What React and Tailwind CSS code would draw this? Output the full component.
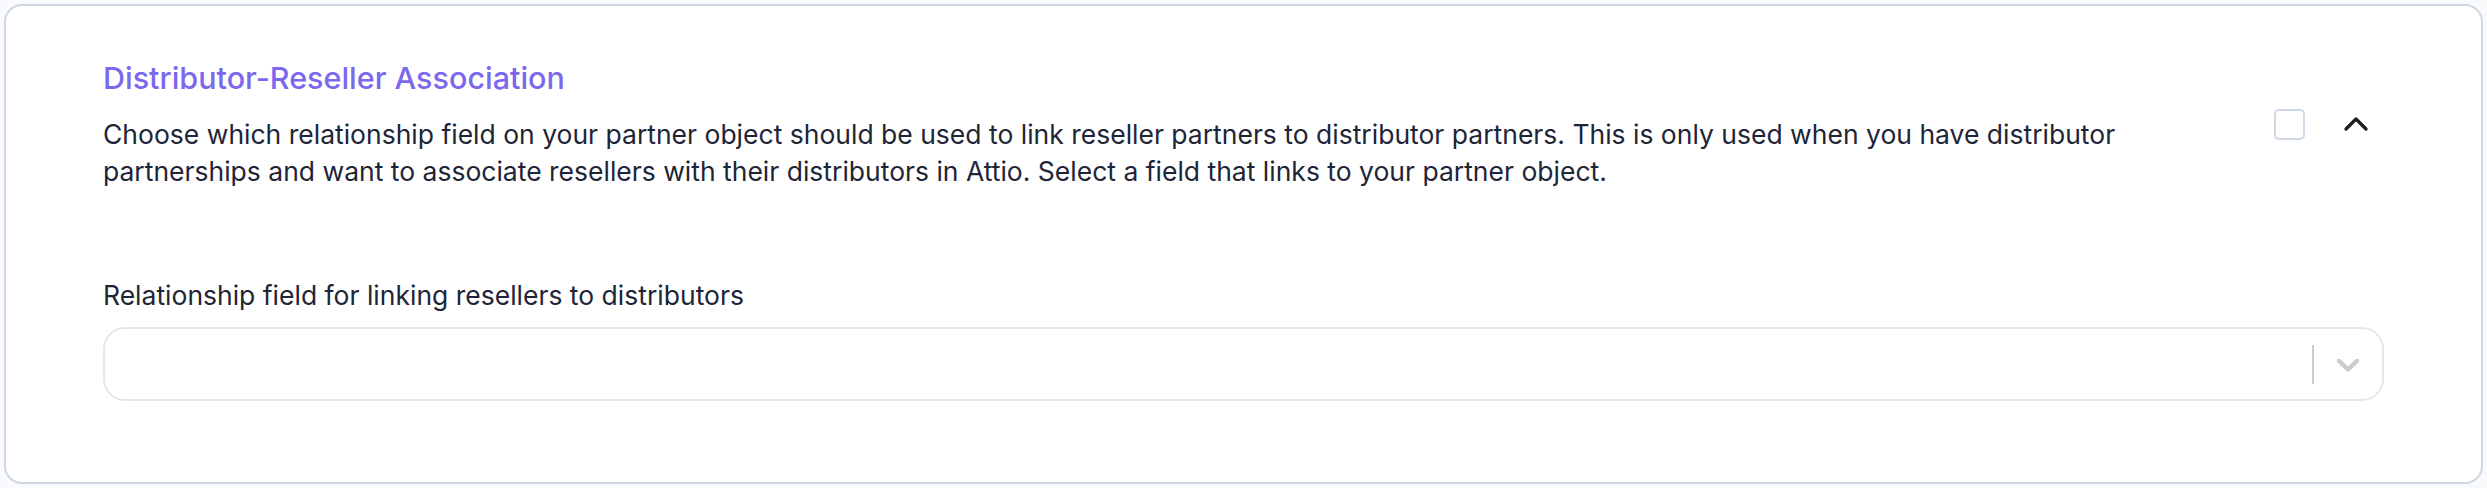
import { ChevronUp } from "lucide-react";

function SelectChevron() {
  return (
    <svg viewBox="0 0 20 20" className="w-[38px] h-[38px] fill-[#cccccc]" aria-hidden="true">
      <path d="M4.516 7.548c0.436-0.446 1.043-0.481 1.576 0l3.908 3.747 3.908-3.747c0.533-0.481 1.141-0.446 1.574 0 0.436 0.445 0.408 1.197 0 1.615-0.406 0.418-4.695 4.502-4.695 4.502-0.217 0.223-0.502 0.335-0.787 0.335s-0.57-0.112-0.789-0.335c0 0-4.287-4.084-4.695-4.502s-0.436-1.17 0-1.615z" />
    </svg>
  );
}

export default function App() {
  return (
    <div className="min-h-screen bg-[#f8fafc] p-1 font-['Inter',sans-serif]">
      <div className="bg-white border-2 border-[#cfd8e4] rounded-[18px] pt-[52px] pb-[81px] px-[97px]">
        <div className="flex items-center">
          <div className="flex-1 max-w-[2100px]">
            <h2 className="text-[30.5px] leading-[40px] font-medium text-[#7b68ee]">
              Distributor-Reseller Association
            </h2>
            <p className="mt-[18px] text-[26.5px] leading-[37px] text-[#1e2537]">
              Choose which relationship field on your partner object should be used to link reseller partners to distributor partners. This is only used when you have distributor partnerships and want to associate resellers with their distributors in Attio. Select a field that links to your partner object.
            </p>
          </div>
          <div className="ml-auto flex items-center gap-[31px] pr-[8px]">
            <div className="w-[31px] h-[31px] rounded-[5px] border-2 border-[#cfd8e4] bg-white" />
            <ChevronUp size={40} strokeWidth={2} className="text-[#1f1f1f]" />
          </div>
        </div>

        <label className="block mt-[87px] text-[26.5px] leading-[36px] text-[#1e2537]">
          Relationship field for linking resellers to distributors
        </label>
        <div className="mt-[14px] h-[74px] flex items-center border-2 border-[#e3e8f0] rounded-[22px] bg-white">
          <div className="flex-1" />
          <div className="w-[2px] h-[39px] bg-[#cccccc]" />
          <div className="px-[15px] flex items-center">
            <SelectChevron />
          </div>
        </div>
      </div>
    </div>
  );
}
